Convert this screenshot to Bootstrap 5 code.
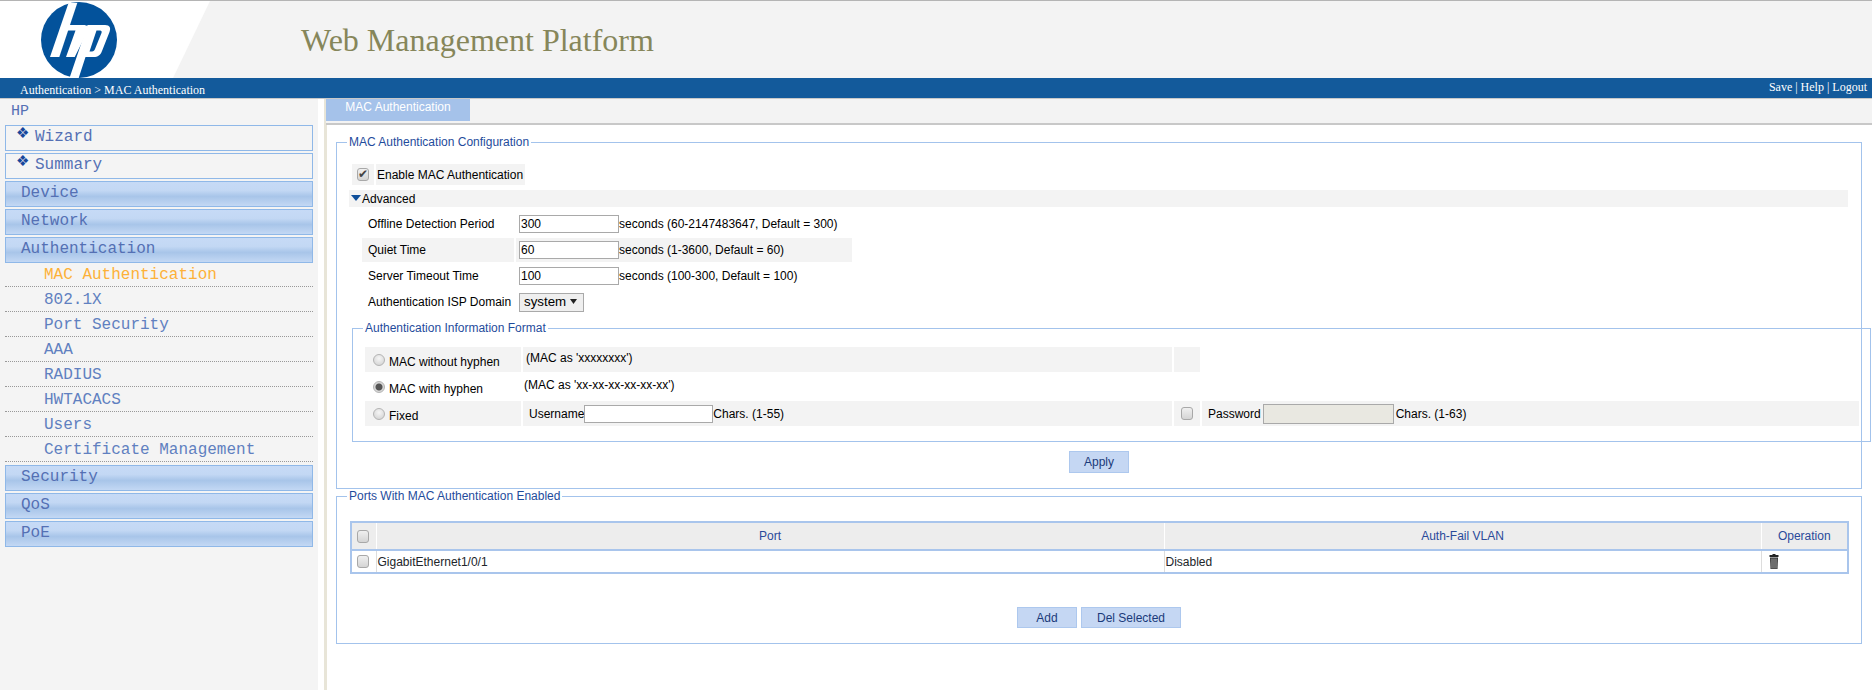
<!DOCTYPE html>
<html lang="en">
<head>
  <meta charset="UTF-8">
  <title>Web Management Platform</title>
  <link href="https://cdn.jsdelivr.net/npm/bootstrap@5.3.0/dist/css/bootstrap.min.css" rel="stylesheet">
  <style>
    body { font: 12px/14px "Liberation Sans", Arial, sans-serif; color: #000; background: #fff; overflow: hidden; }
    .top-head { height: 78px; background: #f3f3f3; border-top: 1px solid #b4b4b4; }
    .top-title { font: 32px/1 "Liberation Serif", serif; color: #86865a; margin: 0 0 0 71px; }
    .crumb-bar { height: 21px; background: #135a9b; border-bottom: 1px solid #c8c8c8; color: #fff; font: 12px/14px "Liberation Serif", serif; padding: 0 5px 0 20px; }
    .crumb-path { padding-top: 5px; }
    .crumb-links { padding-top: 2px; }
    .side-menu { width: 318px; height: 591px; background: #f4f4f4; font: 16px/23px "Liberation Mono", monospace; color: #5470b4; flex: none; }
    .side-root { height: 26px; padding: 1px 0 0 11px; font-size: 15px; }
    .menu-box { height: 26px; width: 308px; margin: 0 0 2px 5px; border: 1px solid #8fb8e8; padding-left: 10px; }
    .menu-box.is-plain { padding-left: 15px; }
    .menu-box.is-group { background: linear-gradient(#c6daf6 0%, #c3d8f4 35%, #a8c5e9 60%, #c3d8f4 100%); }
    .menu-dia { font: 15px/14px "DejaVu Sans", sans-serif; color: #17479b; display: inline-block; width: 19px; vertical-align: 3px; }
    .sub-list { margin: 0 0 3px 5px; width: 308px; }
    .sub-item { height: 25px; line-height: 26px; padding-left: 39px; border-bottom: 1px dotted #999; color: #6080c0; }
    .sub-item:first-child { height: 24px; line-height: 24px; }
    .sub-item.is-on { color: #fdb138; }
    .work-area { margin-left: 6px; border-left: 3px solid #e8e5d8; flex: 1; min-width: 0; }
    .tab-strip { height: 26px; background: #f3f3f3; border-bottom: 2px solid #c8c8c8; margin-left: -1px; }
    .tab-on { width: 144px; height: 22px; background: #a5c2ea; color: #fff; text-align: center; padding-top: 1px; }
    .box-set { border: 1px solid #a3c3ec; padding: 0; margin: 0; min-width: 0; }
    .box-set > legend { float: none; width: auto; font-size: 12px; line-height: 14px; color: #1f4c9c; margin: 0 0 0 10px; padding: 0 2px; }
    .set-main { width: 1526px; margin-left: 9px; }
    .set-first { margin-top: 10px; }
    .set-body { padding: 15px 0 15px 15px; }
    .cell-grey { background: #f3f3f3; }
    .en-row { height: 21px; gap: 2px; }
    .en-box { width: 22px; }
    .en-label { width: 149px; padding-left: 1px; }
    .adv-row { width: 1499px; height: 17px; margin: 5px 0 5px -3px; padding-left: 2px; }
    .adv-arrow { width: 0; height: 0; border: solid transparent; border-width: 6px 5px 0; border-top-color: #0f4f9a; margin: -2px 1px 0 0; }
    .cfg-row { height: 24px; margin: 0 0 2px 10px; gap: 2px; }
    .cfg-label { width: 152px; padding-left: 6px; }
    .cfg-value { width: 336px; padding-left: 3px; }
    .txt-in { width: 100px; height: 18px; border: 1px solid #a9a9a9; background: #fff; padding: 0 1px; font: 12px/14px "Liberation Sans", sans-serif; border-radius: 0; }
    .txt-in.is-user { width: 129px; }
    .txt-in.is-pass { width: 131px; height: 20px; background: #e9e8e1; margin: 0 2px; }
    .isp-pick { appearance: none; width: 65px; height: 19px; border: 1px solid #a9a9a9; border-radius: 0; padding: 0 0 0 4px; font: 13.3px/16px "Liberation Sans", sans-serif; background: #efefef url("data:image/svg+xml,%3Csvg xmlns='http://www.w3.org/2000/svg' width='7' height='5'%3E%3Cpath d='M0 0h7L3.500 5z' fill='%23222'/%3E%3C/svg%3E") no-repeat right 6px top 5px; }
    .set-format { width: 1519px; margin-top: 7px; }
    .fmt-grid { display: grid; grid-template-columns: 156px 649px 26px 657px; grid-auto-rows: 25px; gap: 2px; padding: 12px 0 15px 12px; }
    .fmt-cell { display: flex; align-items: center; }
    .fmt-radio { padding: 5px 0 0 8px; }
    .fmt-raised { padding-bottom: 4px; }
    .fmt-in-1 { padding-left: 3px; }
    .fmt-in-2 { padding-left: 1px; }
    .fmt-in-3 { padding-left: 6px; }
    .fake-check { appearance: none; display: block; width: 12px; height: 13px; margin: 0; flex: none; border: 1px solid #a8a8a8; border-radius: 3px; background: linear-gradient(#f0f0f0, #d4d4d4); position: relative; }
    .fake-check:checked::before { content: "\2714"; position: absolute; left: 0; top: -1px; font: 12px/13px "DejaVu Sans", sans-serif; color: #444; }
    .fake-radio { appearance: none; display: block; width: 12px; height: 12px; margin: -5px 4px 0 0; flex: none; border: 1px solid #b4b4b4; border-radius: 50%; background: radial-gradient(circle at 50% 35%, #f6f6f6, #cfcfcf); }
    .fake-radio:checked { background: radial-gradient(circle, #555 0 3px, #d8d8d8 4px); }
    .btn-row { margin-left: -15px; gap: 4px; }
    .btn-apply { margin-top: 9px; }
    .btn-cfg { background: #c5d7f3; border: 1px solid #adc8ee; border-radius: 0; color: #1a3a7a; font: 12px/14px "Liberation Sans", sans-serif; padding: 0; height: 22px; width: 60px; }
    .btn-low { height: 21px; }
    .btn-wide { width: 100px; }
    .port-grid { width: 1497px; margin: 18px 0 33px -2px; table-layout: fixed; border-collapse: collapse; border: 2px solid #a9c5ec; }
    .port-grid th, .port-grid td { padding: 0; border: 0; height: 23px; vertical-align: middle; box-shadow: none; }
    .port-grid th { background: #ededed; height: 28px; font-weight: 400; color: #2a4a9a; text-align: center; border-bottom: 2px solid #a9c5ec; border-left: 1px solid #fff; }
    .port-grid td { border-left: 1px solid #ddd; padding-left: 1px; }
    .port-grid .fake-check { margin-left: 5px; }
    .port-grid th:first-child, .port-grid td:first-child { border-left: 0; padding-left: 0; }
    .port-grid td.trash-cell { padding-left: 7px; }
    .c-check { width: 25px; }
    .c-port { width: 788px; }
    .c-vlan { width: 597px; }
    .c-op { width: 87px; }
  </style>
</head>
<body>
  <header class="top-head d-flex align-items-center">
    <svg width="230" height="77" viewBox="0 0 230 77" class="flex-shrink-0" aria-label="hp logo">
      <polygon points="0,0 210,0 173,77 0,77" fill="#fff"/>
      <circle cx="79" cy="39" r="38" fill="#03529b"/>
      <path fill="#fff" d="M68.500 2h8.800L59.300 56H50z"/>
      <path fill="#fff" d="M66 24H83c5 0 6 2 4.500 6.500L74.700 56H66l9.500-26.500H64z"/>
      <path fill="#fff" fill-rule="evenodd" d="M87.500 24H105c5 0 6 3 4.500 7L102 50c-1.500 4-4 6-8.500 6h-8L78.700 77H69.500zM96.500 29.500H100c1.500 0 2 1 1.500 2.500L95 48c-.5 1.500-1.500 2.500-3 2.500H89.500z"/>
    </svg>
    <h1 class="top-title">Web Management Platform</h1>
  </header>
  <div class="crumb-bar d-flex justify-content-between">
    <div class="crumb-path">Authentication &gt; MAC Authentication</div>
    <div class="crumb-links">Save | Help | Logout</div>
  </div>

  <div class="d-flex">
    <nav class="side-menu">
      <div class="side-root">HP</div>
      <div class="menu-box"><span class="menu-dia">&#10070;</span>Wizard</div>
      <div class="menu-box"><span class="menu-dia">&#10070;</span>Summary</div>
      <div class="menu-box is-group is-plain">Device</div>
      <div class="menu-box is-group is-plain">Network</div>
      <div class="menu-box is-group is-plain mb-0">Authentication</div>
      <div class="sub-list">
        <div class="sub-item is-on">MAC Authentication</div>
        <div class="sub-item">802.1X</div>
        <div class="sub-item">Port Security</div>
        <div class="sub-item">AAA</div>
        <div class="sub-item">RADIUS</div>
        <div class="sub-item">HWTACACS</div>
        <div class="sub-item">Users</div>
        <div class="sub-item">Certificate Management</div>
      </div>
      <div class="menu-box is-group is-plain">Security</div>
      <div class="menu-box is-group is-plain">QoS</div>
      <div class="menu-box is-group is-plain">PoE</div>
    </nav>

    <main class="work-area">
      <div class="tab-strip"><div class="tab-on">MAC Authentication</div></div>

      <fieldset class="box-set set-main set-first">
        <legend>MAC Authentication Configuration</legend>
        <div class="set-body">
          <div class="en-row d-flex">
            <div class="en-box cell-grey d-flex align-items-center justify-content-center"><input type="checkbox" class="fake-check" checked></div>
            <div class="en-label cell-grey d-flex align-items-center">Enable MAC Authentication</div>
          </div>
          <div class="adv-row cell-grey d-flex align-items-center"><span class="adv-arrow"></span>Advanced</div>

          <div class="cfg-row d-flex">
            <div class="cfg-label d-flex align-items-center">Offline Detection Period</div>
            <div class="cfg-value d-flex align-items-center"><input class="txt-in" value="300">seconds (60-2147483647, Default = 300)</div>
          </div>
          <div class="cfg-row d-flex">
            <div class="cfg-label cell-grey d-flex align-items-center">Quiet Time</div>
            <div class="cfg-value cell-grey d-flex align-items-center"><input class="txt-in" value="60">seconds (1-3600, Default = 60)</div>
          </div>
          <div class="cfg-row d-flex">
            <div class="cfg-label d-flex align-items-center">Server Timeout Time</div>
            <div class="cfg-value d-flex align-items-center"><input class="txt-in" value="100">seconds (100-300, Default = 100)</div>
          </div>
          <div class="cfg-row d-flex">
            <div class="cfg-label d-flex align-items-center">Authentication ISP Domain</div>
            <div class="cfg-value d-flex align-items-center"><select class="isp-pick"><option>system</option></select></div>
          </div>

          <fieldset class="box-set set-format">
            <legend>Authentication Information Format</legend>
            <div class="fmt-grid">
              <div class="fmt-cell fmt-radio cell-grey"><input type="radio" name="fmt" class="fake-radio">MAC without hyphen</div>
              <div class="fmt-cell cell-grey fmt-in-1 fmt-raised">(MAC as 'xxxxxxxx')</div>
              <div class="cell-grey"></div>
              <div></div>
              <div class="fmt-cell fmt-radio"><input type="radio" name="fmt" class="fake-radio" checked>MAC with hyphen</div>
              <div class="fmt-cell fmt-in-2 fmt-raised">(MAC as 'xx-xx-xx-xx-xx-xx')</div>
              <div></div>
              <div></div>
              <div class="fmt-cell fmt-radio cell-grey"><input type="radio" name="fmt" class="fake-radio">Fixed</div>
              <div class="fmt-cell cell-grey fmt-in-3">Username<input class="txt-in is-user">Chars. (1-55)</div>
              <div class="fmt-cell cell-grey justify-content-center"><input type="checkbox" class="fake-check"></div>
              <div class="fmt-cell cell-grey fmt-in-3">Password<input class="txt-in is-pass" disabled>Chars. (1-63)</div>
            </div>
          </fieldset>

          <div class="btn-row btn-apply d-flex justify-content-center">
            <button type="button" class="btn-cfg">Apply</button>
          </div>
        </div>
      </fieldset>

      <fieldset class="box-set set-main">
        <legend>Ports With MAC Authentication Enabled</legend>
        <div class="set-body pt-0">
          <table class="table port-grid">
            <colgroup><col class="c-check"><col class="c-port"><col class="c-vlan"><col class="c-op"></colgroup>
            <thead>
              <tr><th><input type="checkbox" class="fake-check"></th><th>Port</th><th>Auth-Fail VLAN</th><th>Operation</th></tr>
            </thead>
            <tbody>
              <tr>
                <td><input type="checkbox" class="fake-check"></td>
                <td>GigabitEthernet1/0/1</td>
                <td>Disabled</td>
                <td class="trash-cell">
                  <svg width="10" height="15" viewBox="0 0 10 15" class="d-block">
                    <path d="M3.500 0h3v1h3v2H.5V1h3z" fill="#222"/>
                    <path d="M1 3.500h8l-.5 11.500h-7z" fill="#333"/>
                    <path d="M3 4.500v10M5 4.500v10M7 4.500v10" stroke="#aaa" stroke-width="1"/>
                  </svg>
                </td>
              </tr>
            </tbody>
          </table>
          <div class="btn-row d-flex justify-content-center">
            <button type="button" class="btn-cfg btn-low">Add</button>
            <button type="button" class="btn-cfg btn-low btn-wide">Del Selected</button>
          </div>
        </div>
      </fieldset>
    </main>
  </div>
</body>
</html>
